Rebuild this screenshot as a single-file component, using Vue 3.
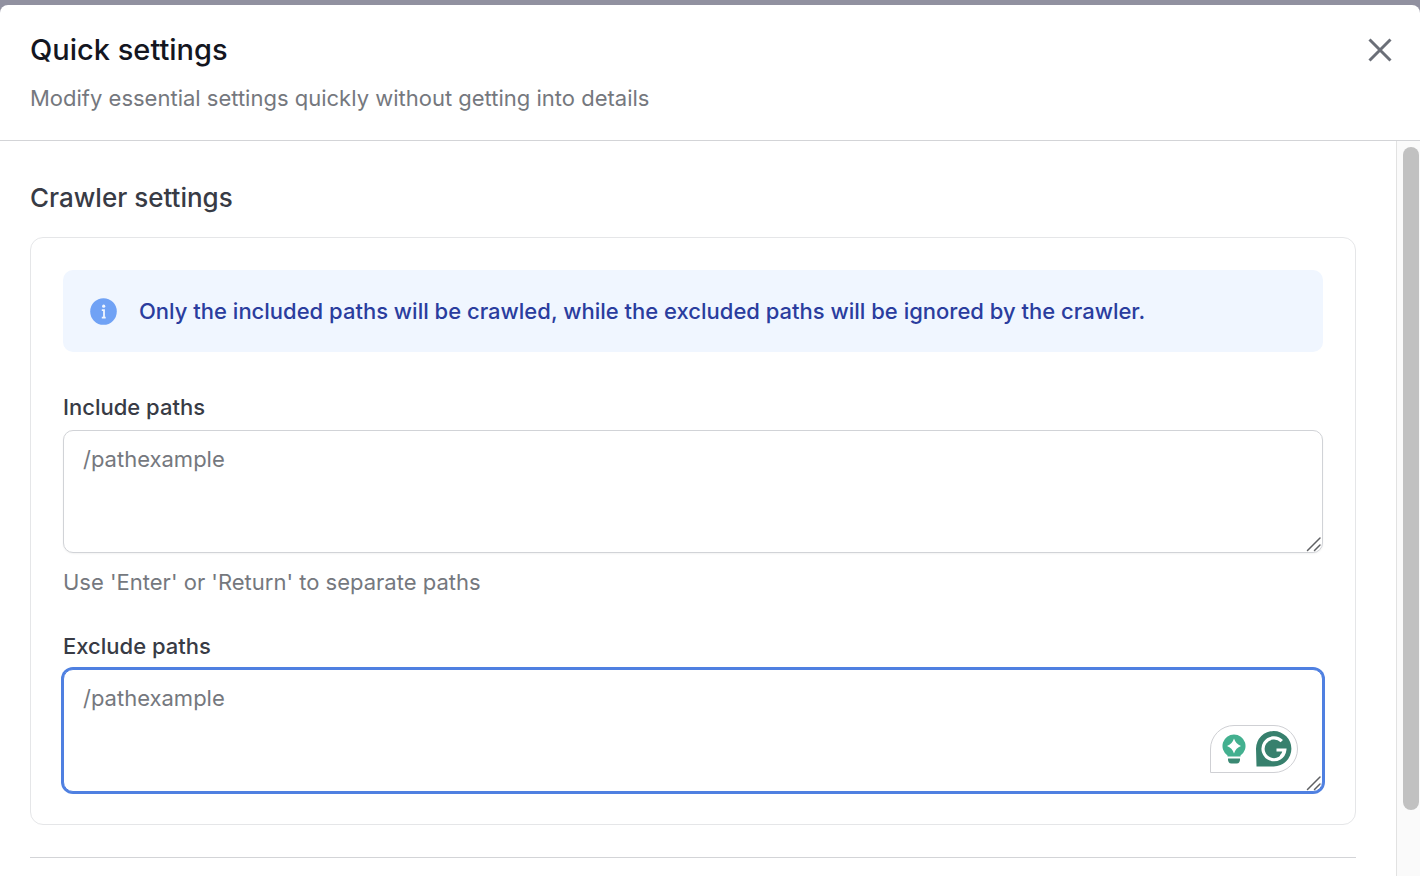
<script setup>
import { ref } from 'vue'

const includePaths = ref('')
const excludePaths = ref('')
</script>

<template>
  <div class="backdrop">
    <section class="dialog" role="dialog" aria-labelledby="dialog-title">
      <header class="header">
        <div class="heading">
          <h1 id="dialog-title">Quick settings</h1>
          <p>Modify essential settings quickly without getting into details</p>
        </div>
        <button class="close" type="button" aria-label="Close">
          <svg viewBox="0 0 24 24" width="24" height="24" fill="none" stroke="#6b6f78" stroke-width="3" stroke-linecap="butt">
            <path d="M1.500 1.500 22.500 22.500M22.500 1.500 1.500 22.500" />
          </svg>
        </button>
      </header>

      <div class="body">
        <main class="content">
          <h2>Crawler settings</h2>
          <div class="card">
            <div class="notice">
              <svg class="info" viewBox="0 0 27 27" width="27" height="27">
                <circle cx="13.500" cy="13.500" r="13.300" fill="#70a2f5" />
                <circle cx="13.700" cy="8.200" r="1.600" fill="#f1f6fe" />
                <path d="M11.800 12.200H14V19.500M11.800 19.600H15.700" fill="none" stroke="#f1f6fe" stroke-width="1.800" />
              </svg>
              <p>Only the included paths will be crawled, while the excluded paths will be ignored by the crawler.</p>
            </div>

            <div class="field">
              <label for="include">Include paths</label>
              <div class="box">
                <textarea id="include" v-model="includePaths" placeholder="/pathexample"></textarea>
                <svg class="grip" viewBox="0 0 16 16" width="16" height="16" fill="none" stroke="#5f6063" stroke-width="1.500" stroke-linecap="round">
                  <path d="M1.500 14.500 14 2M8.500 14.500 14 9" />
                </svg>
              </div>
              <p class="help">Use 'Enter' or 'Return' to separate paths</p>
            </div>

            <div class="field">
              <label for="exclude">Exclude paths</label>
              <div class="box">
                <textarea id="exclude" v-model="excludePaths" class="active" placeholder="/pathexample"></textarea>
                <svg class="grip" viewBox="0 0 16 16" width="16" height="16" fill="none" stroke="#5f6063" stroke-width="1.500" stroke-linecap="round">
                  <path d="M1.500 14.500 14 2M8.500 14.500 14 9" />
                </svg>
                <div class="assistant">
                  <svg viewBox="0 0 24 30" width="24" height="30">
                    <path d="M12 .5A11.500 11.500 0 0 0 5.500 21.500V22.500H18.500V21.500A11.500 11.500 0 0 0 12 .5Z" fill="#43b08f" />
                    <path d="M12 4.500Q13.800 10.200 19 12 13.800 13.800 12 19.500 10.200 13.800 5 12 10.200 10.200 12 4.500Z" fill="#fff" />
                    <path d="M6 24.500H18V26Q17.500 29.500 14.500 29.500H9.500Q6.500 29.500 6 26Z" fill="#3a8973" />
                  </svg>
                  <svg viewBox="0 0 36 36" width="36" height="36">
                    <path d="M0 17.500A17.700 17.700 0 1 1 17.700 35.400H.5Z" fill="#37806d" />
                    <path d="M25.800 10.200A10.900 10.900 0 1 0 28.800 19H20.500M28.600 18.500C28 21.300 26.800 23.500 25 25.500" fill="none" stroke="#fff" stroke-width="3.200" />
                  </svg>
                </div>
              </div>
            </div>
          </div>
          <hr />
        </main>
        <div class="track" aria-hidden="true"><div class="thumb"></div></div>
      </div>
    </section>
  </div>
</template>

<style>
body {
  margin: 0;
}
</style>

<style scoped>
* {
  box-sizing: border-box;
}

.backdrop {
  display: flex;
  height: 100vh;
  padding-top: 5px;
  overflow: hidden;
  background: #9191a0;
  font-family: Inter, "Liberation Sans", sans-serif;
  font-size: 22px;
  line-height: 32px;
}

.dialog {
  display: flex;
  flex: 1;
  flex-direction: column;
  min-width: 0;
  overflow: hidden;
  border-radius: 8px 8px 0 0;
  background: #fff;
}

h1,
h2,
p {
  margin: 0;
}

.header {
  display: flex;
  justify-content: space-between;
  align-items: flex-start;
  padding: 25px 24px 26px 30px;
  border-bottom: 1px solid #d3d4d7;
}

.heading {
  display: grid;
  gap: 12px;
}

h1 {
  color: #14161f;
  font-size: 29px;
  font-weight: 500;
  line-height: 40px;
}

.heading p,
.help {
  color: #75787e;
}

.close {
  display: flex;
  padding: 4px;
  margin-top: 4px;
  border: 0;
  background: none;
}

.body {
  display: flex;
  flex: 1;
  min-height: 0;
}

.content {
  flex: 1;
  min-width: 0;
  padding: 41px 40px 0 30px;
}

h2 {
  margin-bottom: 23px;
  color: #383b45;
  font-size: 26px;
  font-weight: 500;
}

.card {
  padding: 32px;
  border: 1px solid #e5e6e8;
  border-radius: 13px;
}

.notice {
  display: flex;
  align-items: center;
  gap: 22px;
  margin-bottom: 39px;
  padding: 25px 27px;
  border-radius: 10px;
  background: #f0f6ff;
  color: #2a3d9e;
  font-weight: 500;
}

.info {
  flex: none;
}

.field + .field {
  margin-top: 32px;
}

label {
  display: block;
  margin-bottom: 7px;
  color: #383b45;
  font-weight: 500;
}

.box {
  position: relative;
}

textarea {
  display: block;
  width: 100%;
  height: 123px;
  padding: 12px 19px;
  border: 1px solid #d1d3d7;
  border-radius: 10px;
  outline: none;
  resize: none;
  background: #fff;
  box-shadow: 0 1px 2px #0000000d;
  color: #383b45;
  font: inherit;
}

textarea::placeholder {
  color: #75787e;
  opacity: 1;
}

textarea.active {
  border-color: #4f80e1;
  box-shadow: 0 0 0 2px #4f80e1;
}

.grip {
  position: absolute;
  right: 1px;
  bottom: 1px;
}

.help {
  margin-top: 13px;
}

.assistant {
  position: absolute;
  right: 25px;
  bottom: 19px;
  display: flex;
  align-items: center;
  gap: 10px;
  height: 48px;
  padding: 0 5px 0 11px;
  border: 1px solid #cfd0d4;
  border-radius: 24px 24px 24px 0;
  background: #fff;
}

hr {
  height: 1px;
  margin: 32px 0 0;
  border: 0;
  background: #d3d4d7;
}

.track {
  display: flex;
  flex: none;
  width: 24px;
  padding: 6px 1px 66px 6px;
  border-left: 1px solid #e2e2e2;
  background: #fafafa;
}

.thumb {
  flex: 1;
  border-radius: 8px;
  background: #c1c1c1;
}
</style>
